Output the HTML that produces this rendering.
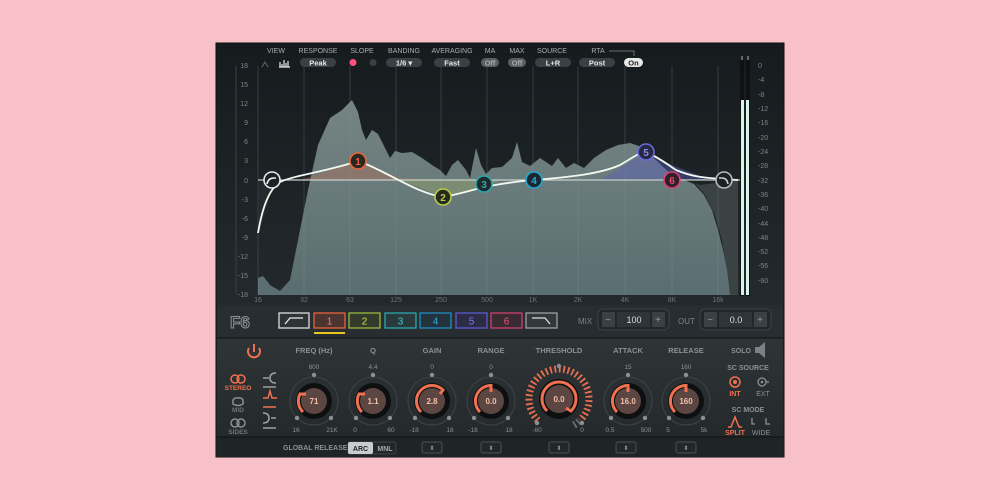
<!DOCTYPE html>
<html><head><meta charset="utf-8"><style>
html,body{margin:0;padding:0;background:#f8c0c9;width:1000px;height:500px;overflow:hidden}
svg text{font-family:"Liberation Sans",sans-serif}
</style></head><body>
<svg width="1000" height="500" viewBox="0 0 1000 500" xmlns="http://www.w3.org/2000/svg">
<defs>
<linearGradient id="bg" x1="0" y1="0" x2="0" y2="1"><stop offset="0" stop-color="#161b1e"/><stop offset="1" stop-color="#2a3134"/></linearGradient>
<linearGradient id="spec" x1="0" y1="0" x2="0" y2="1"><stop offset="0" stop-color="#7a8a88"/><stop offset="1" stop-color="#5d7174"/></linearGradient>
<linearGradient id="low" x1="0" y1="0" x2="0" y2="1"><stop offset="0" stop-color="#2f3436"/><stop offset="1" stop-color="#24292b"/></linearGradient>
</defs>
<rect x="216" y="43" width="568" height="414" fill="url(#bg)"/>
<rect x="216" y="43" width="568" height="414" fill="none" stroke="#0c0f10"/>
<g font-size="7" fill="#7d8588" text-anchor="end">
<text x="248" y="68">18</text><text x="248" y="87">15</text><text x="248" y="106">12</text><text x="248" y="125">9</text><text x="248" y="144">6</text><text x="248" y="163">3</text><text x="248" y="183">0</text><text x="248" y="202">-3</text><text x="248" y="221">-6</text><text x="248" y="240">-9</text><text x="248" y="259">-12</text><text x="248" y="278">-15</text><text x="248" y="297">-18</text>
</g>
<line x1="236" y1="66" x2="236" y2="295" stroke="#3a4245"/>
<!-- spectrum -->
<path d="M730,295 L722,240 L715,215 L705,195 L695,183 L680,178 L700,185 L738,180 L738,295Z" fill="#3a4244"/>
<path d="M258,295 L258,278 L263,276 L270,285 L280,291 L290,280 L298,240 L308,190 L318,145 L330,118 L342,110 L352,100 L358,112 L362,130 L366,140 L372,130 L378,134 L385,148 L390,158 L395,151 L402,153 L412,152 L422,158 L432,165 L440,170 L446,176 L452,165 L458,160 L466,170 L470,178 L476,148 L481,165 L486,174 L492,168 L502,167 L512,158 L517,142 L522,162 L530,166 L540,158 L552,166 L558,158 L566,168 L574,163 L584,168 L594,158 L606,150 L618,145 L630,143 L642,147 L652,156 L662,166 L672,175 L684,180 L694,184 L704,195 L712,210 L718,230 L723,250 L727,270 L730,295Z" fill="url(#spec)" opacity="0.95"/>
<!-- grid over -->
<g stroke="#8a9898" stroke-opacity="0.25" stroke-width="1">
<line x1="258" y1="66" x2="258" y2="295"/><line x1="304" y1="66" x2="304" y2="295"/><line x1="350" y1="66" x2="350" y2="295"/><line x1="396" y1="66" x2="396" y2="295"/><line x1="441" y1="66" x2="441" y2="295"/><line x1="487" y1="66" x2="487" y2="295"/><line x1="533" y1="66" x2="533" y2="295"/><line x1="578" y1="66" x2="578" y2="295"/><line x1="625" y1="66" x2="625" y2="295"/><line x1="672" y1="66" x2="672" y2="295"/><line x1="718" y1="66" x2="718" y2="295"/>
</g>
<!-- band fills -->
<path d="M300,180 L358,161 L400,178 L443,180 Z" fill="#c27055" opacity="0.35"/>
<path d="M400,180 L443,197 L484,188 L500,180Z" fill="#9fb060" opacity="0.35"/>
<path d="M600,180 L646,152 L672,165 L710,180Z" fill="#5a60b8" opacity="0.45"/>
<path d="M258,180 L258,235 L272,190Z" fill="#2a3033" opacity="0.6"/>
<line x1="258" y1="180" x2="740" y2="180" stroke="#c8d0c8" stroke-width="1.3"/>
<path d="M258,233 C262,210 268,190 280,182 C295,175 325,172 358,161 C385,170 415,193 443,197 C460,194 472,190 484,187 C500,184 520,181 534,180 C570,177 600,174 620,165 C632,158 640,152 646,152 C660,158 668,165 676,170 C690,176 700,178 738,180" fill="none" stroke="#f2f8f0" stroke-width="1.8"/>
<!-- nodes -->
<g stroke-width="1.6" font-size="10" text-anchor="middle" font-weight="bold">
<circle cx="272" cy="180" r="8" fill="#1c2224" stroke="#e8e8e8"/><path d="M267,184 Q268,178 274,178 L276,178" stroke="#eee" fill="none"/>
<circle cx="724" cy="180" r="8" fill="#1c2224" stroke="#bbb"/><path d="M719,178 L722,178 Q727,178 728,184" stroke="#ccc" fill="none"/>
<circle cx="358" cy="161" r="8" fill="#2a2622" stroke="#e8643c"/><text x="358" y="165" fill="#e8643c" stroke="none">1</text>
<circle cx="443" cy="197" r="8" fill="#262a20" stroke="#b8d040"/><text x="443" y="201" fill="#b8d040" stroke="none">2</text>
<circle cx="484" cy="184" r="8" fill="#1e2a2c" stroke="#2aa8b0"/><text x="484" y="188" fill="#2aa8b0" stroke="none">3</text>
<circle cx="534" cy="180" r="8" fill="#1c2830" stroke="#20a8d8"/><text x="534" y="184" fill="#20b0e0" stroke="none">4</text>
<circle cx="646" cy="152" r="8" fill="#262840" stroke="#6a6ae0"/><text x="646" y="156" fill="#8a8af0" stroke="none">5</text>
<circle cx="672" cy="180" r="8" fill="#302028" stroke="#e04070"/><text x="672" y="184" fill="#e84878" stroke="none">6</text>
</g>
<g font-size="7" fill="#6f7679" text-anchor="middle">
<text x="258" y="302">16</text><text x="304" y="302">32</text><text x="350" y="302">63</text><text x="396" y="302">125</text><text x="441" y="302">250</text><text x="487" y="302">500</text><text x="533" y="302">1K</text><text x="578" y="302">2K</text><text x="625" y="302">4K</text><text x="672" y="302">8K</text><text x="718" y="302">16k</text>
</g>
<!-- meters -->
<rect x="740" y="60" width="4" height="236" fill="#111"/><rect x="746" y="60" width="4" height="236" fill="#111"/>
<rect x="741" y="100" width="3" height="195" fill="#d8f4e8"/><rect x="746" y="100" width="3" height="195" fill="#d8f4e8"/>
<rect x="741" y="56" width="2" height="4" fill="#666"/><rect x="747" y="56" width="2" height="4" fill="#666"/>
<g font-size="7" fill="#7d8588" text-anchor="start">
<text x="758" y="68">0</text><text x="758" y="82">-4</text><text x="758" y="97">-8</text><text x="758" y="111">-12</text><text x="758" y="125">-16</text><text x="758" y="140">-20</text><text x="758" y="154">-24</text><text x="758" y="168">-28</text><text x="758" y="183">-32</text><text x="758" y="197">-36</text><text x="758" y="211">-40</text><text x="758" y="226">-44</text><text x="758" y="240">-48</text><text x="758" y="254">-52</text><text x="758" y="268">-56</text><text x="758" y="283">-60</text>
</g>
<!-- header -->
<g font-size="7" fill="#a7adb0" text-anchor="middle">
<text x="276" y="53">VIEW</text><text x="318" y="53">RESPONSE</text><text x="362" y="53">SLOPE</text><text x="404" y="53">BANDING</text><text x="452" y="53">AVERAGING</text><text x="490" y="53">MA</text><text x="517" y="53">MAX</text><text x="552" y="53">SOURCE</text><text x="598" y="53">RTA</text>
</g>
<path d="M609,51 L634,51 L634,56" stroke="#888" fill="none" stroke-width="0.8"/>
<path d="M262,67 L265,62 L268,67" stroke="#666" fill="none"/>
<path d="M280,67 V62 M282,67 V64 M284,67 V60 M286,67 V63 M288,67 V61 M279,67 H290" stroke="#e8e8e8" stroke-width="1.2"/>
<g font-size="7.5" text-anchor="middle" font-weight="bold">
<rect x="300" y="58" width="36" height="9" rx="4.5" fill="#3a4144"/><text x="318" y="65.5" fill="#e6e6e6">Peak</text>
<circle cx="353" cy="62.5" r="3.5" fill="#ff4f7f"/><circle cx="373" cy="62.5" r="3.5" fill="#3a3f42"/>
<rect x="386" y="58" width="36" height="9" rx="4.5" fill="#3a4144"/><text x="404" y="65.5" fill="#e6e6e6">1/6 ▾</text>
<rect x="434" y="58" width="36" height="9" rx="4.5" fill="#3a4144"/><text x="452" y="65.5" fill="#e6e6e6">Fast</text>
<rect x="481" y="58" width="18" height="9" rx="4.5" fill="#5a5f60"/><text x="490" y="65.5" fill="#aaa">Off</text>
<rect x="508" y="58" width="18" height="9" rx="4.5" fill="#5a5f60"/><text x="517" y="65.5" fill="#aaa">Off</text>
<rect x="535" y="58" width="36" height="9" rx="4.5" fill="#3a4144"/><text x="553" y="65.5" fill="#e6e6e6">L+R</text>
<rect x="579" y="58" width="36" height="9" rx="4.5" fill="#3a4144"/><text x="597" y="65.5" fill="#e6e6e6">Post</text>
<rect x="624" y="58" width="19" height="9" rx="4.5" fill="#e8e8e8"/><text x="633.5" y="65.5" fill="#222">On</text>
</g>
<!-- band row -->
<rect x="217" y="305" width="566" height="32" fill="#272d30"/>
<text x="230" y="328" font-size="17" font-weight="bold" fill="#2a3033" stroke="#8a9295" stroke-width="1">F6</text>
<g stroke-width="1.3">
<rect x="279" y="313" width="30" height="15" fill="#2e3336" stroke="#ddd"/><path d="M285,324 L290,318 L303,318" stroke="#eee" fill="none"/>
<rect x="314" y="313" width="31" height="15" fill="#4a3530" stroke="#e8643c"/>
<rect x="349" y="313" width="31" height="15" fill="#333a2a" stroke="#9ab840"/>
<rect x="385" y="313" width="31" height="15" fill="#2a3a3c" stroke="#2aa8b0"/>
<rect x="420" y="313" width="31" height="15" fill="#23323c" stroke="#2090c0"/>
<rect x="456" y="313" width="31" height="15" fill="#2c2c44" stroke="#5a5ad0"/>
<rect x="491" y="313" width="31" height="15" fill="#3a2a32" stroke="#d04070"/>
<rect x="526" y="313" width="31" height="15" fill="#33383b" stroke="#9aa0a2"/><path d="M532,318 L545,318 L550,324" stroke="#ddd" fill="none"/>
</g>
<g font-size="10" text-anchor="middle">
<text x="329.5" y="324.5" fill="#f08060">1</text><text x="364.5" y="324.5" fill="#c8e050">2</text><text x="400.5" y="324.5" fill="#40c8d0">3</text><text x="435.5" y="324.5" fill="#30b0e8">4</text><text x="471.5" y="324.5" fill="#7a7af0">5</text><text x="506.5" y="324.5" fill="#f05080">6</text>
</g>
<rect x="314" y="332" width="31" height="2" fill="#e8c820"/>
<text x="578" y="324" font-size="8" fill="#7d8588">MIX</text>
<rect x="598" y="309" width="71" height="21" rx="5" fill="#22282a" stroke="#3c4346"/>
<rect x="602" y="312" width="13" height="15" fill="#3a4144"/><rect x="652" y="312" width="13" height="15" fill="#3a4144"/><rect x="617" y="312" width="33" height="15" fill="#2e3437"/>
<text x="608" y="323" font-size="10" fill="#999" text-anchor="middle">−</text><text x="658" y="323" font-size="10" fill="#999" text-anchor="middle">+</text><text x="634" y="323" font-size="9" fill="#ddd" text-anchor="middle">100</text>
<text x="678" y="324" font-size="8" fill="#7d8588">OUT</text>
<rect x="700" y="309" width="71" height="21" rx="5" fill="#22282a" stroke="#3c4346"/>
<rect x="704" y="312" width="13" height="15" fill="#3a4144"/><rect x="754" y="312" width="13" height="15" fill="#3a4144"/><rect x="719" y="312" width="33" height="15" fill="#2e3437"/>
<text x="710" y="323" font-size="10" fill="#999" text-anchor="middle">−</text><text x="760" y="323" font-size="10" fill="#999" text-anchor="middle">+</text><text x="736" y="323" font-size="9" fill="#ddd" text-anchor="middle">0.0</text>
<!-- lower panel -->
<rect x="217" y="338" width="566" height="99" fill="url(#low)"/>
<line x1="217" y1="338" x2="783" y2="338" stroke="#111"/>
<rect x="217" y="437" width="566" height="20" fill="#1f2426"/>
<line x1="217" y1="437" x2="783" y2="437" stroke="#111"/>
<!-- power -->
<path d="M249,348 A6,6 0 1 0 259,348" stroke="#f07050" stroke-width="2" fill="none"/><line x1="254" y1="344" x2="254" y2="352" stroke="#f07050" stroke-width="2"/>
<g fill="none" stroke-width="1.5">
<circle cx="235" cy="379" r="4" stroke="#f07050"/><circle cx="241" cy="379" r="4" stroke="#f07050"/>
<path d="M233,404 Q232,397 238,398 Q244,397 243,404 Q238,407 233,404Z" stroke="#8a9093"/>
<circle cx="235" cy="423" r="4" stroke="#8a9093"/><circle cx="241" cy="423" r="4" stroke="#8a9093"/>
<path d="M263,378 H269 M276,373 Q270,373 270,378 Q270,383 276,383 M263,387 H276" stroke="#9aa0a3"/>
<path d="M263,398 H268 L270,391 L272,398 H277 M263,407 H276" stroke="#f07050"/>
<path d="M263,418 H268 M276,413 Q270,413 270,418 Q270,423 276,423 M263,428 H276" stroke="#9aa0a3" transform="translate(539,0) scale(-1,1)"/>
</g>
<g font-size="6.5" text-anchor="middle" font-weight="bold">
<text x="238" y="390" fill="#f07050">STEREO</text><text x="238" y="412" fill="#6f7679">MID</text><text x="238" y="434" fill="#6f7679">SIDES</text>
</g>
<!-- knobs -->
<g font-size="7.5" fill="#8a9195" text-anchor="middle" font-weight="bold">
<text x="314" y="353">FREQ (Hz)</text><text x="373" y="353">Q</text><text x="432" y="353">GAIN</text><text x="491" y="353">RANGE</text><text x="559" y="353">THRESHOLD</text><text x="628" y="353">ATTACK</text><text x="686" y="353">RELEASE</text>
</g>
<g font-size="6.5" fill="#8a9195" text-anchor="middle">
<text x="314" y="369">600</text><text x="373" y="369">4.4</text><text x="432" y="369">0</text><text x="491" y="369">0</text><text x="628" y="369">15</text><text x="686" y="369">160</text>
<text x="296" y="432">16</text><text x="332" y="432">21K</text><text x="355" y="432">0</text><text x="391" y="432">60</text><text x="414" y="432">-18</text><text x="450" y="432">18</text><text x="473" y="432">-18</text><text x="509" y="432">18</text><text x="537" y="432">-60</text><text x="582" y="432">0</text><text x="610" y="432">0.5</text><text x="646" y="432">500</text><text x="668" y="432">5</text><text x="704" y="432">5k</text>
</g>
<g>
<circle cx="314" cy="401" r="24" fill="none" stroke="#3e4548"/><circle cx="314" cy="401" r="18" fill="#0d0f10"/><circle cx="314" cy="401" r="13" fill="#5b4642"/>
<circle cx="314" cy="375" r="2.2" fill="#8a9195"/><circle cx="297" cy="418" r="2.2" fill="#8a9195"/><circle cx="331" cy="418" r="2.2" fill="#8a9195"/>
<path d="M303,412 A15.5,15.5 0 0 1 300,394 L306,394" stroke="#f07050" stroke-width="3" fill="none"/>
<text x="314" y="404" font-size="8" fill="#f4c0a8" text-anchor="middle" font-weight="bold">71</text>
</g>
<g>
<circle cx="373" cy="401" r="24" fill="none" stroke="#3e4548"/><circle cx="373" cy="401" r="18" fill="#0d0f10"/><circle cx="373" cy="401" r="13" fill="#5b4642"/>
<circle cx="373" cy="375" r="2.2" fill="#8a9195"/><circle cx="356" cy="418" r="2.2" fill="#8a9195"/><circle cx="390" cy="418" r="2.2" fill="#8a9195"/>
<path d="M362,412 A15.5,15.5 0 0 1 359,394 L365,394" stroke="#f07050" stroke-width="3" fill="none"/>
<text x="373" y="404" font-size="8" fill="#f4c0a8" text-anchor="middle" font-weight="bold">1.1</text>
</g>
<g>
<circle cx="432" cy="401" r="24" fill="none" stroke="#3e4548"/><circle cx="432" cy="401" r="18" fill="#0d0f10"/><circle cx="432" cy="401" r="13" fill="#5b4642"/>
<circle cx="432" cy="375" r="2.2" fill="#8a9195"/><circle cx="415" cy="418" r="2.2" fill="#8a9195"/><circle cx="449" cy="418" r="2.2" fill="#8a9195"/>
<path d="M421,412 A15.5,15.5 0 0 1 443,390 L440,394" stroke="#f07050" stroke-width="3" fill="none"/>
<text x="432" y="404" font-size="8" fill="#f4c0a8" text-anchor="middle" font-weight="bold">2.8</text>
</g>
<g>
<circle cx="491" cy="401" r="24" fill="none" stroke="#3e4548"/><circle cx="491" cy="401" r="18" fill="#0d0f10"/><circle cx="491" cy="401" r="13" fill="#5b4642"/>
<circle cx="491" cy="375" r="2.2" fill="#8a9195"/><circle cx="474" cy="418" r="2.2" fill="#8a9195"/><circle cx="508" cy="418" r="2.2" fill="#8a9195"/>
<path d="M480,412 A15.5,15.5 0 0 1 491,385.5 L491,392" stroke="#f07050" stroke-width="3" fill="none"/>
<text x="491" y="404" font-size="8" fill="#f4c0a8" text-anchor="middle" font-weight="bold">0.0</text>
</g>
<g>
<path d="M537.8,420.2 A30,30 0 1 1 580.2,420.2" fill="none" stroke="#e87050" stroke-width="7" stroke-dasharray="1.8 2.6"/>
<path d="M574,425 A30,30 0 0 0 580.2,420.2" fill="none" stroke="#6a6e70" stroke-width="7.5" stroke-dasharray="1.8 2.6"/>
<circle cx="559" cy="399" r="20" fill="#0d0f10"/><circle cx="559" cy="399" r="14" fill="#5b4642"/>
<circle cx="559" cy="366" r="2.2" fill="#8a9195"/><circle cx="537" cy="423" r="2.2" fill="#8a9195"/><circle cx="582" cy="423" r="2.2" fill="#8a9195"/>
<path d="M547,411 A17,17 0 1 1 571,411 L566,408" stroke="#f07050" stroke-width="3" fill="none"/>
<text x="559" y="402" font-size="8" fill="#f4c0a8" text-anchor="middle" font-weight="bold">0.0</text>
</g>
<g>
<circle cx="628" cy="401" r="24" fill="none" stroke="#3e4548"/><circle cx="628" cy="401" r="18" fill="#0d0f10"/><circle cx="628" cy="401" r="13" fill="#5b4642"/>
<circle cx="628" cy="375" r="2.2" fill="#8a9195"/><circle cx="611" cy="418" r="2.2" fill="#8a9195"/><circle cx="645" cy="418" r="2.2" fill="#8a9195"/>
<path d="M617,412 A15.5,15.5 0 0 1 628,385.5 L628,392" stroke="#f07050" stroke-width="3" fill="none"/>
<text x="628" y="404" font-size="8" fill="#f4c0a8" text-anchor="middle" font-weight="bold">16.0</text>
</g>
<g>
<circle cx="686" cy="401" r="24" fill="none" stroke="#3e4548"/><circle cx="686" cy="401" r="18" fill="#0d0f10"/><circle cx="686" cy="401" r="13" fill="#5b4642"/>
<circle cx="686" cy="375" r="2.2" fill="#8a9195"/><circle cx="669" cy="418" r="2.2" fill="#8a9195"/><circle cx="703" cy="418" r="2.2" fill="#8a9195"/>
<path d="M675,412 A15.5,15.5 0 0 1 686,385.5 L686,392" stroke="#f07050" stroke-width="3" fill="none"/>
<text x="686" y="404" font-size="8" fill="#f4c0a8" text-anchor="middle" font-weight="bold">160</text>
</g>
<!-- right controls -->
<g font-size="7" fill="#8a9195" text-anchor="middle" font-weight="bold">
<text x="741" y="353">SOLO</text><text x="748" y="370">SC SOURCE</text><text x="748" y="412">SC MODE</text>
<text x="735" y="396" fill="#f07050">INT</text><text x="763" y="396" font-weight="normal">EXT</text>
<text x="735" y="435" fill="#f07050">SPLIT</text><text x="761" y="435" font-weight="normal">WIDE</text>
</g>
<path d="M755,347 H759 L765,342 V358 L759,353 H755Z" fill="#7a8285"/>
<circle cx="735" cy="382" r="5" fill="none" stroke="#f07050" stroke-width="1.5"/><circle cx="735" cy="382" r="2" fill="#f07050"/>
<circle cx="762" cy="382" r="4" fill="none" stroke="#8a9195" stroke-width="1.3"/><circle cx="762" cy="382" r="1.3" fill="#8a9195"/><line x1="766" y1="382" x2="769" y2="382" stroke="#8a9195" stroke-width="1.3"/>
<path d="M728,427 H731 L735,417 L739,427 H742" stroke="#f07050" stroke-width="1.5" fill="none"/>
<path d="M752,418 V424 H755 M766,418 V424 H770" stroke="#8a9195" stroke-width="1.3" fill="none"/>
<!-- bottom strip -->
<text x="283" y="450" font-size="7" fill="#8a9195" font-weight="bold">GLOBAL RELEASE</text>
<rect x="348" y="442" width="48" height="12" rx="2" fill="#22282a" stroke="#3c4346"/>
<rect x="348" y="442" width="25" height="12" rx="2" fill="#c8ccce"/>
<text x="360.5" y="451" font-size="7" fill="#222" text-anchor="middle" font-weight="bold">ARC</text>
<text x="385" y="451" font-size="7" fill="#aaa" text-anchor="middle" font-weight="bold">MNL</text>
<g fill="#22282a" stroke="#4a5154">
<rect x="422" y="442" width="20" height="11" rx="2"/><rect x="481" y="442" width="20" height="11" rx="2"/><rect x="549" y="442" width="20" height="11" rx="2"/><rect x="616" y="442" width="20" height="11" rx="2"/><rect x="676" y="442" width="20" height="11" rx="2"/>
</g>
<g font-size="6" fill="#999" text-anchor="middle">
<text x="432" y="450">⬍</text><text x="491" y="450">⬍</text><text x="559" y="450">⬍</text><text x="626" y="450">⬍</text><text x="686" y="450">⬍</text>
</g>
</svg>
</body></html>
